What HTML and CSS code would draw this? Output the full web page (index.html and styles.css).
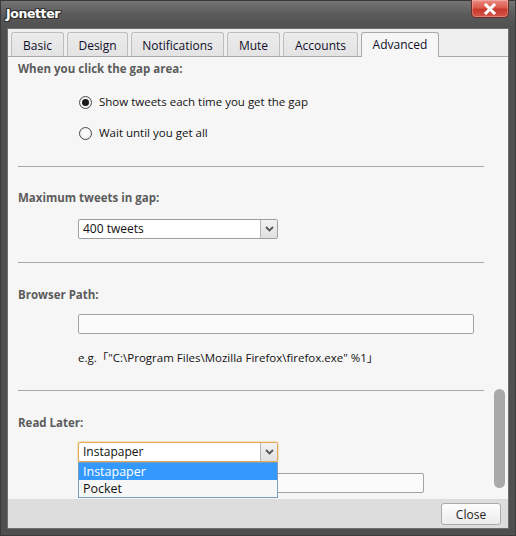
FILE: index.html
```html
<!DOCTYPE html>
<html>
<head>
<meta charset="utf-8">
<link rel="stylesheet" href="styles.css">
</head>
<body>
<div class="window">
  <div class="titlebar">
    <span class="title">Jonetter</span>
    <div class="closebtn"><svg width="14" height="12" viewBox="0 0 14 12"><path d="M3 2 L11 10 M11 2 L3 10" stroke="#fff" stroke-width="3" stroke-linecap="square"/></svg></div>
  </div>
  <div class="client">
    <div class="tabstrip">
      <div class="tab">Basic</div>
      <div class="tab">Design</div>
      <div class="tab">Notifications</div>
      <div class="tab">Mute</div>
      <div class="tab">Accounts</div>
      <div class="tab active">Advanced</div>
    </div>
    <div class="panel">
      <div class="content">
        <div class="section s1">
          <div class="heading">When you click the gap area:</div>
          <div class="radio-row first"><span class="radio checked"></span>Show tweets each time you get the gap</div>
          <div class="radio-row second"><span class="radio"></span>Wait until you get all</div>
        </div>
        <div class="sep"></div>
        <div class="section s2">
          <div class="heading">Maximum tweets in gap:</div>
          <div class="select"><span class="sel-text">400 tweets</span><span class="sel-btn"><svg width="9" height="6" viewBox="0 0 9 6"><path d="M1 1 L4.5 4.5 L8 1" fill="none" stroke="#555" stroke-width="1.8"/></svg></span></div>
        </div>
        <div class="sep"></div>
        <div class="section s3">
          <div class="heading">Browser Path:</div>
          <div class="input wide"></div>
          <div class="hint"><span class="eg">e.g.</span><span class="bro">「</span>"C:\Program Files\Mozilla Firefox\firefox.exe" %1<span class="brc">」</span></div>
        </div>
        <div class="sep"></div>
        <div class="section s4">
          <div class="heading">Read Later:</div>
          <div class="combo-wrap">
            <div class="select focused"><span class="sel-text">Instapaper</span><span class="sel-btn"><svg width="9" height="6" viewBox="0 0 9 6"><path d="M1 1 L4.5 4.5 L8 1" fill="none" stroke="#555" stroke-width="1.8"/></svg></span></div>
            <div class="droplist">
              <div class="opt hl">Instapaper</div>
              <div class="opt">Pocket</div>
            </div>
          </div>
          <div class="input mid"></div>
        </div>
      </div>
      <div class="scrollcol"><div class="thumb"></div></div>
    </div>
    <div class="footer">
      <div class="btn">Close</div>
    </div>
  </div>
</div>
</body>
</html>
```
FILE: styles.css
```css
* { box-sizing: border-box; }
html, body { margin: 0; padding: 0; }
body {
  width: 516px; height: 536px; overflow: hidden;
  background: #4e4e4e;
  font-family: "Open Sans", "Noto Sans", "Noto Sans CJK JP", sans-serif;
  font-size: 11.5px;
  color: #111;
}
.window {
  width: 516px; height: 536px;
  display: flex; flex-direction: column;
  background: linear-gradient(#747474 0px, #5a5a5a 14px, #4f4f4f 28px, #4f4f4f 100%);
  border: 1px solid #3a3a3a;
}
.titlebar {
  height: 27px; flex: none;
  display: flex; align-items: flex-start; justify-content: space-between;
}
.title {
  margin: 5px 0 0 5px;
  font-family: "DejaVu Sans", sans-serif;
  font-weight: bold; font-size: 12.5px; letter-spacing: -0.4px;
  color: #fff;
  text-shadow: -1px -1px 0 #333, 1px -1px 0 #333, -1px 1px 0 #333, 1px 1px 0 #333, 0 1px 0 #333, 0 -1px 0 #333, 1px 0 0 #333, -1px 0 0 #333;
}
.closebtn {
  width: 38px; height: 18px; margin: -1px 6px 0 0;
  background: linear-gradient(#eb8a80 0%, #db5a4d 45%, #c7392c 55%, #d6574b 100%);
  border: 1px solid #6a2e28; border-top: none;
  border-radius: 0 0 5px 5px;
  display: flex; align-items: center; justify-content: center;
  box-shadow: inset 0 0 0 1px rgba(255,255,255,0.25);
}
.client {
  flex: 1; display: flex; flex-direction: column;
  margin: 0 6px 6px 6px;
  border: 1px solid #707070;
  background: #efefef;
}
.tabstrip {
  height: 28px; flex: none;
  display: flex; align-items: flex-end;
  padding-left: 3px; gap: 3px;
  border-bottom: 1px solid #a9a9a9;
  background: #efefef;
}
.tab {
  height: 24px;
  padding: 1px 0 0 0;
  display: flex; align-items: center; justify-content: center;
  background: linear-gradient(#ececec, #e3e3e3);
  border: 1px solid #bdbdbd; border-bottom: none;
  border-radius: 3px 3px 0 0;
  font-size: 12px; color: #10102a;
}
.tab:nth-child(1) { width: 53px; }
.tab:nth-child(2) { width: 61px; }
.tab:nth-child(3) { width: 93px; }
.tab:nth-child(4) { width: 53px; }
.tab:nth-child(5) { width: 75px; }
.tab.active {
  width: 78px;
  height: 25px; margin-bottom: -1px;
  background: #f6f6f6;
  border-color: #a9a9a9;
  padding: 0 0 1px 0;
}
.panel {
  flex: 1; display: flex;
  background: #f6f6f6;
  min-height: 0;
}
.content {
  flex: 1; padding-left: 10px; position: relative;
}
.section { display: flex; flex-direction: column; align-items: flex-start; }
.heading {
  height: 16px; line-height: 16px;
  font-weight: bold; color: #5c5c5c; font-size: 11.5px;
}
.s1 .heading { margin-top: 4px; }
.sep { height: 1px; background: #a8a8a8; width: 466px; }
.s1 { padding-bottom: 25px; }
.radio-row {
  display: flex; align-items: center; height: 16px; line-height: 16px;
  margin-left: 60px;
}
.radio-row.first { margin-top: 17px; }
.radio-row.second { margin-top: 15px; }
.radio {
  width: 13px; height: 13px; border-radius: 50%;
  border: 1px solid #4a4a4a; background: radial-gradient(#ffffff, #e8e8e8);
  margin-right: 7px; margin-left: 1px;
  display: flex; align-items: center; justify-content: center;
}
.radio.checked::after {
  content: ""; width: 7px; height: 7px; border-radius: 50%; background: #1a1a1a;
}
.s2 .heading { margin-top: 23px; }
.s3 .heading, .s4 .heading { margin-top: 24px; }
.s2 { padding-bottom: 23px; }
.select {
  margin-left: 60px; margin-top: 13px;
  width: 200px; height: 20px;
  border: 1px solid #9e9e9e; border-radius: 2px;
  background: #fff;
  display: flex; align-items: stretch;
  font-size: 12px;
}
.sel-text { flex: 1; padding-left: 4px; line-height: 18px; }
.sel-btn {
  width: 17px; border-left: 1px solid #b5b5b5;
  background: linear-gradient(#f2f2f2, #e0e0e0);
  display: flex; align-items: center; justify-content: center;
}
.input {
  margin-left: 60px; margin-top: 11px; height: 20px;
  border: 1px solid #a3a3a3; border-radius: 2px; background: #fbfbfb;
}
.input.wide { width: 396px; }
.input.mid { width: 346px; }
.hint { margin-left: 60px; margin-top: 16px; height: 16px; line-height: 16px; color: #111; white-space: nowrap; }
.eg { margin-right: 0; }
.bro, .brc { display: inline-block; }
.s3 { padding-bottom: 24px; }
.combo-wrap { position: relative; margin-left: 60px; margin-top: 11px; }
.combo-wrap .select { margin: 0; }
.select.focused { border-color: #e3a95b; box-shadow: 0 0 0 0.5px #f1c98f; }
.droplist {
  position: absolute; left: 0; top: 20px; width: 200px; z-index: 3;
  border: 1px solid #7b9ebd; background: #f7f7f7;
  font-size: 12.5px;
}
.opt { height: 17px; line-height: 17px; padding-left: 4px; color: #111; }
.opt.hl { background: #3399ff; color: #fff; }
.scrollcol { width: 20px; flex: none; position: relative; }
.thumb {
  position: absolute; left: 6px; top: 332px; width: 11px; height: 99px;
  border-radius: 6px; background: #a9a9a9;
}
.footer {
  height: 29px; flex: none; background: #dddddd;
  display: flex; justify-content: flex-end; align-items: flex-start;
  padding: 4px 7px 0 0;
}
.btn {
  width: 60px; height: 22px; border: 1px solid #ababab; border-radius: 3px;
  background: linear-gradient(#fdfdfd, #ececec);
  display: flex; align-items: center; justify-content: center;
  font-size: 12px; color: #222;
}
```
